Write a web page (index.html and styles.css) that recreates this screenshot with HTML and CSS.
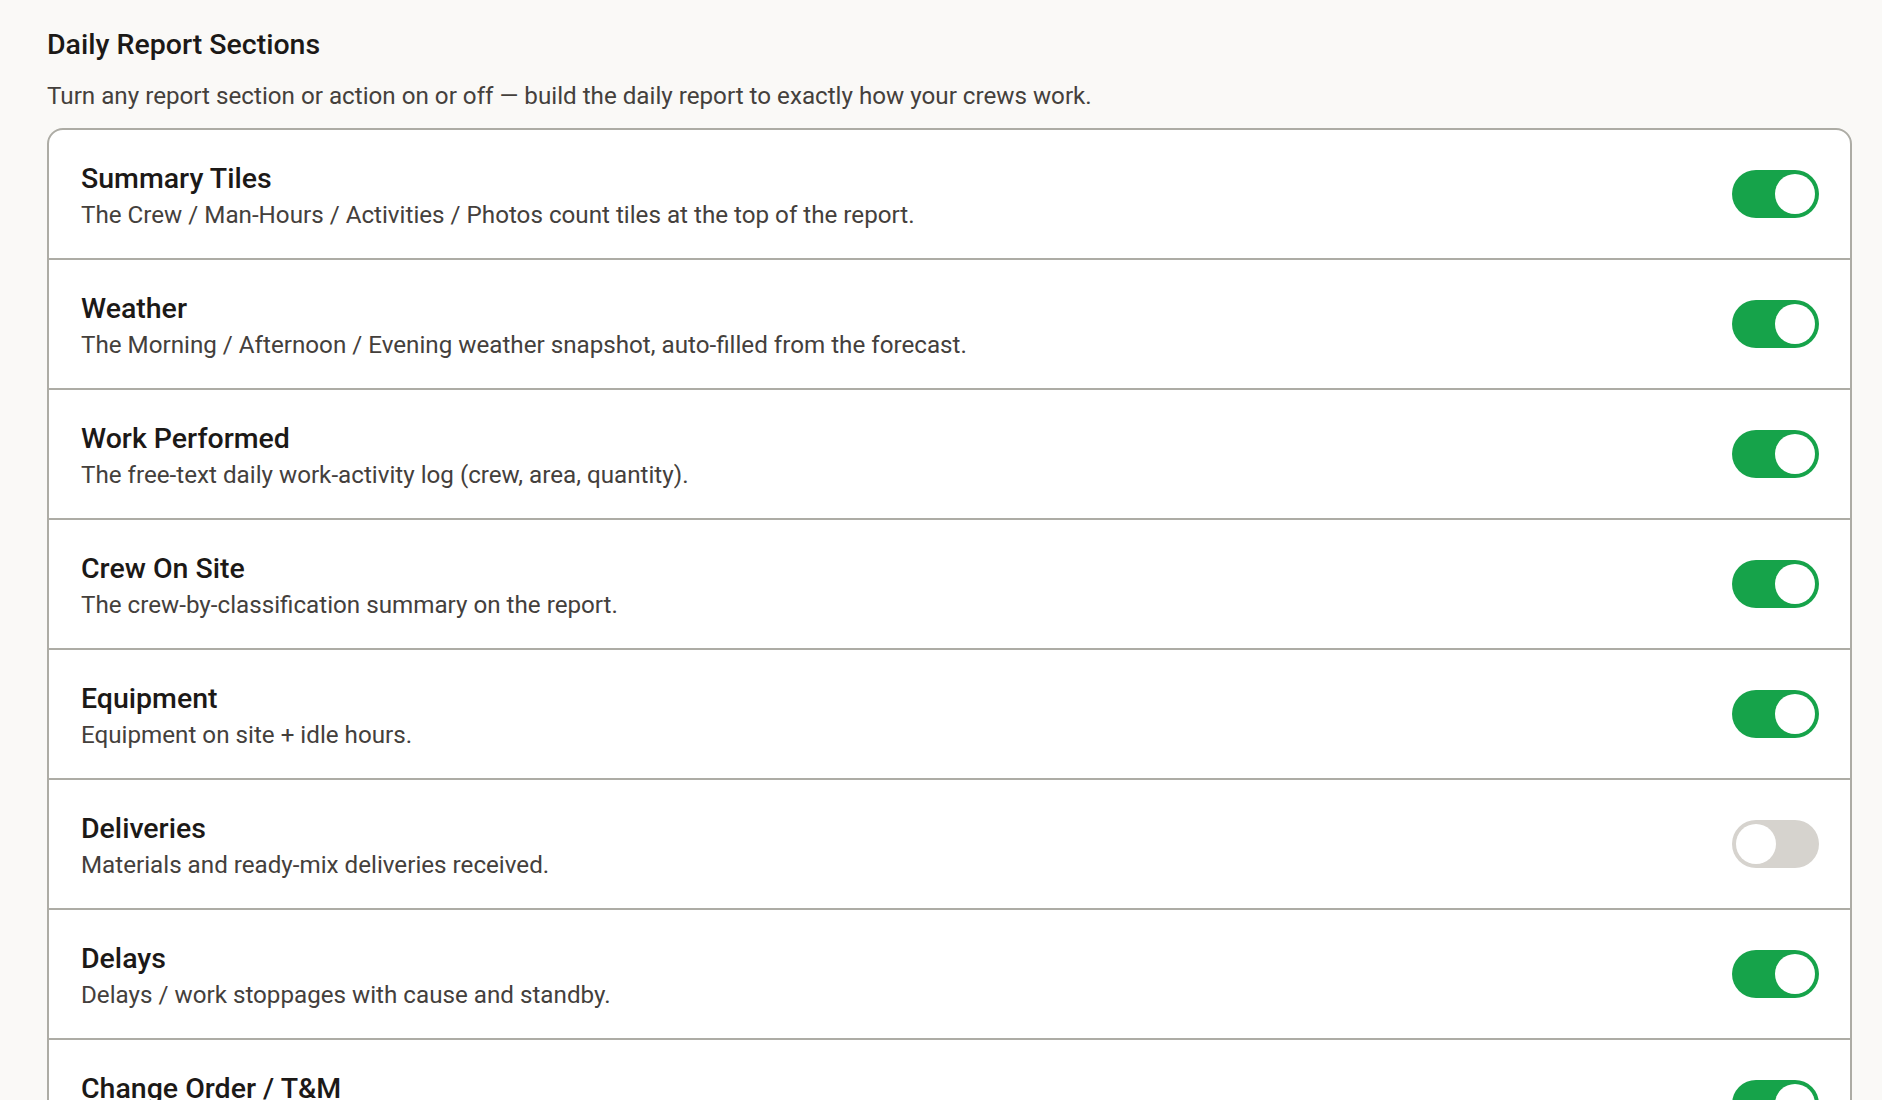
FILE: index.html
```html
<!DOCTYPE html>
<html lang="en">
<head>
  <meta charset="UTF-8">
  <meta name="viewport" content="width=device-width, initial-scale=1.0">
  <title>Daily Report Sections</title>
  <link rel="stylesheet" href="styles.css">
</head>
<body>
  <div class="page">
    <h2 class="section-title">Daily Report Sections</h2>
    <p class="section-sub">Turn any report section or action on or off — build the daily report to exactly how your crews work.</p>

    <div class="card">
      <div class="row">
        <div class="row-text">
          <div class="row-title">Summary Tiles</div>
          <div class="row-desc">The Crew / Man-Hours / Activities / Photos count tiles at the top of the report.</div>
        </div>
        <button class="toggle on" aria-pressed="true"><span class="knob"></span></button>
      </div>
      <div class="row">
        <div class="row-text">
          <div class="row-title">Weather</div>
          <div class="row-desc">The Morning / Afternoon / Evening weather snapshot, auto-filled from the forecast.</div>
        </div>
        <button class="toggle on" aria-pressed="true"><span class="knob"></span></button>
      </div>
      <div class="row">
        <div class="row-text">
          <div class="row-title">Work Performed</div>
          <div class="row-desc">The free-text daily work-activity log (crew, area, quantity).</div>
        </div>
        <button class="toggle on" aria-pressed="true"><span class="knob"></span></button>
      </div>
      <div class="row">
        <div class="row-text">
          <div class="row-title">Crew On Site</div>
          <div class="row-desc">The crew-by-classification summary on the report.</div>
        </div>
        <button class="toggle on" aria-pressed="true"><span class="knob"></span></button>
      </div>
      <div class="row">
        <div class="row-text">
          <div class="row-title">Equipment</div>
          <div class="row-desc">Equipment on site + idle hours.</div>
        </div>
        <button class="toggle on" aria-pressed="true"><span class="knob"></span></button>
      </div>
      <div class="row">
        <div class="row-text">
          <div class="row-title">Deliveries</div>
          <div class="row-desc">Materials and ready-mix deliveries received.</div>
        </div>
        <button class="toggle" aria-pressed="false"><span class="knob"></span></button>
      </div>
      <div class="row">
        <div class="row-text">
          <div class="row-title">Delays</div>
          <div class="row-desc">Delays / work stoppages with cause and standby.</div>
        </div>
        <button class="toggle on" aria-pressed="true"><span class="knob"></span></button>
      </div>
      <div class="row">
        <div class="row-text">
          <div class="row-title">Change Order / T&amp;M</div>
          <div class="row-desc">Extra work tickets with labor, equipment and materials.</div>
        </div>
        <button class="toggle on" aria-pressed="true"><span class="knob"></span></button>
      </div>
    </div>
  </div>
</body>
</html>
```

FILE: styles.css
```css
body {
  margin: 0;
  background: #faf9f7;
  font-family: Roboto, "Liberation Sans", sans-serif;
  color: #1c1917;
}

.page {
  padding: 28px 30px 40px 47px;
}

.section-title {
  margin: 0;
  font-size: 28.5px;
  line-height: 34px;
  font-weight: 500;
  color: #1c1917;
}

.section-sub {
  margin: 19px 0 0;
  font-size: 24.2px;
  line-height: 30px;
  color: #44403c;
}

.card {
  margin-top: 17px;
  background: #fff;
  border: 2px solid #adaca5;
  border-radius: 16px;
  overflow: hidden;
}

.row {
  display: flex;
  align-items: center;
  justify-content: space-between;
  height: 128px;
  padding: 0 31px 0 32px;
  border-bottom: 2px solid #adaca5;
}

.row:last-child {
  border-bottom: none;
}

.row-text {
  padding-top: 4px;
}

.row-title {
  font-size: 28.5px;
  line-height: 34px;
  font-weight: 500;
  color: #1c1917;
}

.row-desc {
  margin-top: 3.5px;
  font-size: 24.2px;
  line-height: 30px;
  color: #44403c;
}

/* switch: 87x48 track with a 40px knob */
.toggle {
  position: relative;
  flex: none;
  width: 87px;
  height: 48px;
  padding: 0;
  border: none;
  border-radius: 24px;
  background: #d6d3ce;
  cursor: pointer;
}

.toggle .knob {
  position: absolute;
  top: 4px;
  left: 4px;
  width: 40px;
  height: 40px;
  border-radius: 50%;
  background: #fff;
}

.toggle.on {
  background: #16a34a;
}

.toggle.on .knob {
  left: 43px;
}
```
